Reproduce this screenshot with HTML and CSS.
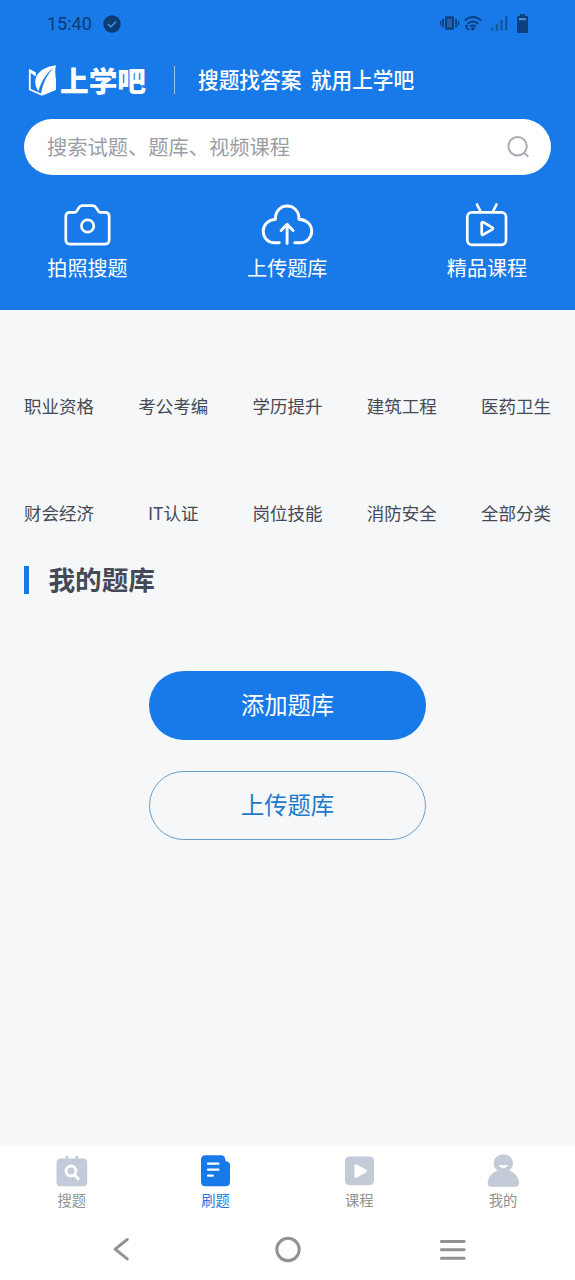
FILE: index.html
```html
<!DOCTYPE html>
<html lang="zh-CN">
<head>
<meta charset="utf-8">
<title>上学吧</title>
<link rel="stylesheet" href="styles.css">
</head>
<body>
<div class="app">
  <header class="hero">
    <div class="status">
      <span class="clock">15:40</span>
      <svg class="check" width="18" height="18" viewBox="0 0 18 18"><circle cx="9" cy="9" r="8.7" fill="#0c3c72"/><path d="M5 9.2l2.800 2.700 5.300-5.400" fill="none" stroke="#3f8ce0" stroke-width="1.700"/></svg>
      <svg class="signals" width="90" height="20" viewBox="440 14 90 20">
        <g fill="#0c3f7c">
          <rect x="445" y="16.300" width="9" height="13.500" rx="1"/>
          <rect x="447" y="18.500" width="5" height="9" fill="#2a609e"/>
          <rect x="442.200" y="18.800" width="1.700" height="8.600"/><rect x="455.200" y="18.800" width="1.700" height="8.600"/>
          <rect x="440" y="21" width="1.300" height="4.500"/><rect x="457.900" y="21" width="1.300" height="4.500"/>
          <circle cx="473" cy="28.700" r="1.700"/>
          <path d="M466.500 24.300l2 2.500h-1.300v2.700h-1.400v-2.700h-1.300zM468.500 30.600l-1.800-2.300h3.400z"/>
          <rect x="517" y="16" width="11" height="17" rx="1.200"/><rect x="520" y="14" width="5" height="3"/>
        </g>
        <rect x="519" y="18.200" width="7" height="2" fill="#5698dd"/>
        <g fill="none" stroke="#0c3f7c" stroke-width="1.900"><path d="M464.800 20.500q8.200-7 16.400 0M467.600 23.700q5.400-4.500 10.800 0M470.100 26.500q2.900-2.200 5.800 0"/></g>
        <g fill="#1455a0"><rect x="491" y="27.500" width="2.200" height="3"/><rect x="495.800" y="24" width="2.200" height="6.500"/><rect x="500.300" y="20" width="2.400" height="10.500"/><rect x="505" y="16" width="2.400" height="14.500"/></g>
      </svg>
    </div>
    <div class="brand">
      <svg class="emblem" width="29" height="33" viewBox="28 64 29 33">
        <path d="M29.800 70v19.500l12.200 5.300 13-5.300V78" fill="none" stroke="#fff" stroke-width="1.800"/>
        <path d="M29 68.700l6.800 3.500v4.300l-5.200-3.500z" fill="#fff"/>
        <path d="M56 65.300C46 66.500 36.500 71.500 35.300 80c-.5 4.200 1 8.500 3.200 11.200C41 82 46 73.500 53.500 67.800 46.500 75.500 42 85 41 95l14.600-5.400V77.500c-.2-4-.8-8 .4-12.200z" fill="#fff"/>
      </svg>
      <span class="wordmark">上学吧</span>
      <span class="divider"></span>
      <span class="slogan">搜题找答案<i></i>就用上学吧</span>
    </div>
    <div class="search">
      <span>搜索试题、题库、视频课程</span>
      <svg width="24" height="24" viewBox="505 135 24 24" fill="none" stroke="#a9adb6" stroke-width="2"><circle cx="516.600" cy="146.300" r="9.200"/><path d="M523 152.800l4.300 4"/></svg>
    </div>
    <nav class="actions">
      <div class="action">
        <svg width="52" height="48" viewBox="62 202 52 48" fill="none" stroke="#fff" stroke-width="2.700" stroke-linejoin="round"><path d="M70 212.300h4.500q1.500 0 2.300-1.300l2-3.200q1.300-2.200 3.300-2.200h10.800q2 0 3.300 2.200l2 3.200q.8 1.300 2.300 1.300h4.500q4.200 0 4.200 4.200v23.300q0 4.300-4.200 4.300H70q-4.200 0-4.200-4.300v-23.300q0-4.200 4.200-4.200z"/><circle cx="87.600" cy="226" r="6.200"/></svg>
        <span>拍照搜题</span>
      </div>
      <div class="action">
        <svg width="56" height="48" viewBox="259.500 202 56 48" fill="none" stroke="#fff" stroke-width="2.900" stroke-linecap="round" stroke-linejoin="round"><path d="M279.800 242.800h-4.600c-6.500 0-11.500-5-11.500-11.600 0-6.300 5-11.500 12.300-12-.7-7 4.700-13.200 11.700-13.200 7 0 12.300 5.900 11.600 13.200 7.500.3 12.900 5.300 12.900 11.900 0 6.700-5.100 11.700-11.700 11.700h-5.200"/><path d="M287.600 243.500V225m-6 5.500 6-6.200 6 6.200"/></svg>
        <span>上传题库</span>
      </div>
      <div class="action">
        <svg width="48" height="48" viewBox="463 202 48 48" fill="none" stroke="#fff" stroke-width="2.700" stroke-linecap="round" stroke-linejoin="round"><rect x="467.300" y="212.300" width="38.700" height="32.500" rx="4.500"/><path d="M477 204.500l3.300 6.500M496.500 204.500l-3.300 6.500M481.700 223.500v9.800q0 2.300 2 1.100l8.300-4.700q1.800-1.200 0-2.400l-8.300-4.900q-2-1.200-2 1.100z"/></svg>
        <span>精品课程</span>
      </div>
    </nav>
  </header>
  <main class="content">
    <div class="categories">
      <span>职业资格</span><span>考公考编</span><span>学历提升</span><span>建筑工程</span><span>医药卫生</span>
      <span>财会经济</span><span>IT认证</span><span>岗位技能</span><span>消防安全</span><span>全部分类</span>
    </div>
    <h2 class="heading">我的题库</h2>
    <div class="buttons">
      <button class="btn primary">添加题库</button>
      <button class="btn outline">上传题库</button>
    </div>
  </main>
  <footer class="footer">
    <nav class="tabs">
      <div class="tab">
        <svg width="34" height="34" viewBox="55 1154 34 34"><path d="M61 1158.500h4.500v-1.500q0-1.300 1.100-1.300h.6q1.100 0 1.100 1.300v1.500h7v-1.500q0-1.300 1.100-1.300h.6q1.100 0 1.100 1.300v1.500H83q4.200 0 4.200 4v19.700q0 4-4.200 4H60.700q-4.200 0-4.200-4v-19.700q0-4 4.500-4z" fill="#c3cbd8"/><circle cx="71" cy="1171" r="5" fill="none" stroke="#fff" stroke-width="2.800"/><path d="M75 1175.500l3 3.300" stroke="#fff" stroke-width="3" stroke-linecap="round"/></svg>
        <span>搜题</span>
      </div>
      <div class="tab active">
        <svg width="34" height="34" viewBox="199 1154 34 34"><path d="M205.500 1155.200h15.300q4 0 4.300 3.700.1 2.500 2.500 2.800 2.400.5 2.400 3.600v16.500q0 4.500-4.500 4.500h-20q-4.500 0-4.500-4.500v-22q0-4.600 4.500-4.600z" fill="#1879e8"/><path d="M208 1163.700h10.500M208 1169.700h10.500M208 1175.700h4.800" stroke="#fff" stroke-width="2.200" stroke-linecap="round"/></svg>
        <span>刷题</span>
      </div>
      <div class="tab">
        <svg width="34" height="34" viewBox="342 1154 34 34"><rect x="345" y="1156.500" width="29" height="28.700" rx="4.500" fill="#c3cbd8"/><path d="M355.700 1165.500v11l9.800-5.500z" fill="#fff" stroke="#fff" stroke-width="2.600" stroke-linejoin="round"/></svg>
        <span>课程</span>
      </div>
      <div class="tab">
        <svg width="34" height="34" viewBox="486 1154 34 34"><path d="M487.700 1183.300c.3-7 4.500-10.700 10-12.800-2.600-1.600-4-4.100-4-7 0-5.300 4.300-9.300 9.600-9.300 5.400 0 9.700 4 9.700 9.300 0 2.900-1.400 5.400-4 7 5.600 2.100 9.700 5.900 10 12.800 0 2-1.500 3.400-3.500 3.400h-24.300c-2 0-3.500-1.400-3.500-3.400z" fill="#c3cbd8"/><path d="M499 1165.700q4.300 4.300 8.600 0z" fill="#fff" stroke="#fff" stroke-width="1" stroke-linejoin="round"/></svg>
        <span>我的</span>
      </div>
    </nav>
    <div class="system">
      <svg width="34" height="30" viewBox="105 1234 34 30" fill="none" stroke="#929292" stroke-width="2.900" stroke-linecap="round" stroke-linejoin="round"><path d="M127.300 1239.500l-12.200 9.700 12.200 9.700"/></svg>
      <svg width="34" height="30" viewBox="270.700 1234 34 30" fill="none" stroke="#929292" stroke-width="3"><circle cx="287.700" cy="1249.500" r="11.200"/></svg>
      <svg width="34" height="30" viewBox="436 1234 34 30" fill="none" stroke="#929292" stroke-width="2.900" stroke-linecap="round"><path d="M441.400 1241.500h22.800M441.400 1249.700h22.800M441.400 1258.200h22.800"/></svg>
    </div>
  </footer>
</div>
</body>
</html>
```
FILE: styles.css
```css
* { box-sizing: border-box; }
body { margin: 0; font-family: "Noto Sans CJK SC", sans-serif; }
svg { display: block; flex: none; }
.app { width: 575px; height: 1280px; display: flex; flex-direction: column; background: #f5f7f9; overflow: hidden; }
.hero { height: 310px; flex: none; background: #1879e9; color: #fff; }
.status { height: 48px; display: flex; align-items: center; padding: 0 45px 0 47px; }
.clock { font: 400 18px/20px Roboto, sans-serif; color: #0c3c72; width: 55.500px; }
.signals { margin-left: auto; }
.brand { height: 71px; padding: 0 28px 6px; display: flex; align-items: center; }
.wordmark { width: 87px; margin: 0 0 2px 3px; font-size: 28.700px; line-height: 34px; font-weight: 900; white-space: nowrap; }
.divider { width: 1px; height: 28px; margin: 0 0 1px 27px; background: #9cc7f7; }
.slogan { margin: 0 0 5px 23px; font-size: 22px; line-height: 30px; font-weight: 500; white-space: nowrap; transform: scaleX(.94); transform-origin: left center; }
.slogan i { display: inline-block; width: 10px; }
.search { height: 56px; margin: 0 24px; padding: 0 21.500px 0 23px; border-radius: 28px; background: #fff; display: flex; align-items: center; justify-content: space-between; color: #999da6; font-size: 20.250px; line-height: 30px; }
.actions { display: flex; justify-content: space-between; padding: 27px 48px 0 47.500px; }
.action { width: 80px; display: flex; flex-direction: column; align-items: center; font-size: 20.100px; line-height: 30px; white-space: nowrap; }
.action span { margin-top: 3px; }
.content { flex: 1; padding: 83px 24px 0; }
.categories { display: grid; grid-template-columns: repeat(5, 70px); justify-content: space-between; row-gap: 81px; font-size: 17.500px; line-height: 26px; color: #454955; text-align: center; white-space: nowrap; }
.heading { margin: 33px 0 0; padding-left: 24.500px; height: 40px; display: flex; align-items: center; font-size: 26.600px; font-weight: 700; line-height: 40px; color: #454955; position: relative; }
.heading::before { content: ""; position: absolute; left: 0; top: 7px; width: 5px; height: 28px; background: #1879e9; }
.buttons { margin-top: 72px; display: flex; flex-direction: column; align-items: center; gap: 31px; }
.btn { width: 277px; height: 69px; border-radius: 35px; padding: 0 0 4px; font: 400 23.300px/34px "Noto Sans CJK SC", sans-serif; }
.primary { background: #1879e9; border: 0; color: #fff; }
.outline { background: transparent; border: 1px solid #659fca; color: #2279cc; }
.footer { height: 134px; flex: none; background: #fff; }
.tabs { display: grid; grid-template-columns: repeat(4, 1fr); padding-top: 8px; }
.tab { display: flex; flex-direction: column; align-items: center; font-size: 14.300px; line-height: 20px; color: #929292; }
.tab span { margin-top: 2px; }
.active { color: #1879e8; }
.system { margin-top: 24px; display: flex; justify-content: space-between; padding: 0 105px; }
```
